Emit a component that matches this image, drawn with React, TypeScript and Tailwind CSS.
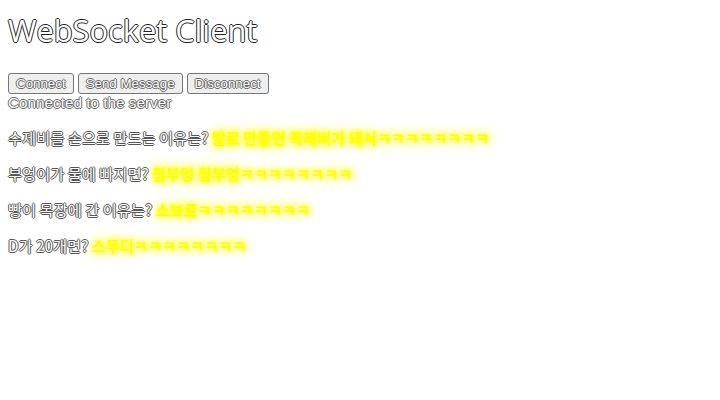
const jokes = [
  { q: '수제비를 손으로 만드는 이유는?', a: '발로 만들면 족제비가 돼서ㅋㅋㅋㅋㅋㅋㅋㅋ' },
  { q: '부엉이가 물에 빠지면?', a: '첨부엉 첨부엉ㅋㅋㅋㅋㅋㅋㅋㅋ' },
  { q: '빵이 목장에 간 이유는?', a: '소보로ㅋㅋㅋㅋㅋㅋㅋㅋ' },
  { q: 'D가 20개면?', a: '스무디ㅋㅋㅋㅋㅋㅋㅋㅋ' },
];

export default function App() {
  return (
    <div className="min-h-[400px] w-[720px] bg-white px-2 text-white">
      <h1 className="pt-[8px] text-[30.8px] font-normal leading-[44px] font-['Open_Sans',sans-serif] [text-shadow:-1px_0_#222,0_1px_#222,1px_0_#222,0_-1px_#222]">
        WebSocket Client
      </h1>

      <div className="mt-[21px] flex gap-[4px] font-['Liberation_Sans',Arial,sans-serif] text-[13.33px]">
        {['Connect', 'Send Message', 'Disconnect'].map(label => (
          <button
            key={label}
            className="h-[21px] rounded-[3px] border border-[#767676] bg-[#efefef] px-[7px] leading-[17px] [text-shadow:-1px_0_#666,0_1px_#666,1px_0_#666,0_-1px_#666]"
          >
            {label}
          </button>
        ))}
      </div>
      <div className="font-['Liberation_Sans',Arial,sans-serif] text-[15.3px] leading-[17px] [text-shadow:-1px_0_#666,0_1px_#666,1px_0_#666,0_-1px_#666]">
        Connected to the server
      </div>

      <div className="mt-[16px] flex flex-col gap-[16px] font-['Noto_Sans_CJK_KR','Noto_Sans',sans-serif] text-[15.3px] leading-[20px]">
        {jokes.map(j => (
          <p key={j.q}>
            <span className="[text-shadow:-1px_0_#555,0_1px_#555,1px_0_#555,0_-1px_#555]">{j.q} </span>
            <span className="font-bold text-[#ffff00] [text-shadow:0_0_5px_#ffff00,0_0_10px_#ffff00,0_0_14px_#ffff66]">
              {j.a}
            </span>
          </p>
        ))}
      </div>
    </div>
  );
}
